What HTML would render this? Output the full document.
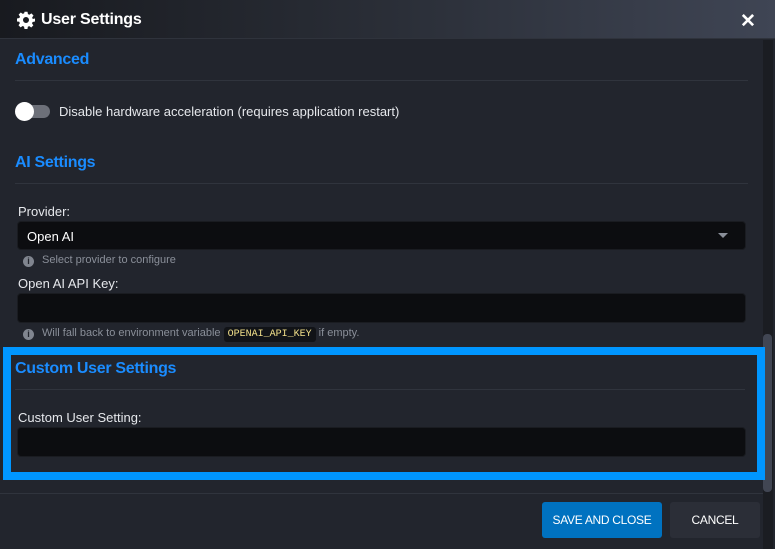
<!DOCTYPE html>
<html><head><style>
*{box-sizing:border-box;margin:0;padding:0}
body{width:775px;height:549px;background:#22252d;font-family:"Liberation Sans",sans-serif;overflow:hidden;position:relative;color:#e6e8ec}
.hdr{position:absolute;left:0;top:0;width:775px;height:39px;background:linear-gradient(90deg,#181a1f 0%,#2a2e37 50%,#3f4554 100%);border-bottom:1px solid #2f333c}
.hdr .t{position:absolute;left:41px;top:11px;font-size:16px;font-weight:bold;color:#fff;letter-spacing:-0.2px}
.x{position:absolute;left:740px;top:10px;font-size:19px;font-weight:bold;color:#fff}
.h2{position:absolute;left:15px;font-size:16px;font-weight:bold;color:#1a8cff;letter-spacing:-0.3px}
.line{position:absolute;left:15px;width:733px;height:1px;background:#30343d}
.lbl{position:absolute;left:18px;font-size:13px;color:#e6e8ec}
.inp{position:absolute;left:17px;width:729px;height:30px;background:#0c0d10;border-radius:4px;border:1px solid #1a1c21}
.hint{position:absolute;left:23px;font-size:11px;color:#8a8f99}
.hint i{display:inline-block;width:11px;height:11px;border-radius:50%;background:#80858f;color:#22252d;font-size:9px;font-style:normal;font-weight:bold;text-align:center;line-height:11px;margin-right:8px;vertical-align:-1px}
code{font-family:"Liberation Mono",monospace;font-size:10px;background:#111317;color:#f2e08a;padding:2px 4px;border-radius:3px}
.btn{position:absolute;top:502px;height:36px;font-size:12px;color:#fff;text-align:center;line-height:36px;border-radius:3px;letter-spacing:-0.3px}
</style></head><body>
<div class="hdr">
<svg style="position:absolute;left:17px;top:11px" width="18" height="18" viewBox="0 0 24 24"><path fill="#fff" d="M10 1h4l.6 3.2 1.9.8 2.7-1.8 2.8 2.8-1.8 2.7.8 1.9L24 10v4l-3.2.6-.8 1.9 1.8 2.7-2.8 2.8-2.7-1.8-1.9.8L14 24h-4l-.6-3.2-1.9-.8-2.7 1.8-2.8-2.8 1.8-2.7-.8-1.9L0 14v-4l3.2-.6.8-1.9L2.2 4.8 5 2l2.7 1.8 1.9-.8zM12 8a4 4 0 100 8 4 4 0 000-8z"/></svg>
<div class="t">User Settings</div>
<div class="x">✕</div>
</div>
<div style="position:absolute;left:763px;top:40px;width:10px;height:509px;background:#1b1d22"></div>
<div style="position:absolute;left:763px;top:334px;width:9px;height:158px;background:#414653;border-radius:4px"></div>

<div class="h2" style="top:51px">Advanced</div>
<div class="line" style="top:80px"></div>
<div style="position:absolute;left:16px;top:105px;width:34px;height:13px;background:#6d7079;border-radius:7px"></div>
<div style="position:absolute;left:15px;top:102px;width:19px;height:19px;background:#fff;border-radius:50%"></div>
<div class="lbl" style="left:59px;top:104px">Disable hardware acceleration (requires application restart)</div>

<div class="h2" style="top:154px">AI Settings</div>
<div class="line" style="top:183px"></div>
<div class="lbl" style="top:204px">Provider:</div>
<div class="inp" style="top:221px;height:29px"><span style="position:absolute;left:9px;top:7px;font-size:13px;color:#fff">Open AI</span><span style="position:absolute;right:17px;top:11px;border-left:5px solid transparent;border-right:5px solid transparent;border-top:5px solid #8a8f99"></span></div>
<div class="hint" style="top:254px"><i>i</i>Select provider to configure</div>
<div class="lbl" style="top:276px">Open AI API Key:</div>
<div class="inp" style="top:293px"></div>
<div class="hint" style="top:327px"><i>i</i>Will fall back to environment variable <code>OPENAI_API_KEY</code> if empty.</div>

<div style="position:absolute;left:3px;top:347px;width:762px;height:133px;border:8px solid #0096ff"></div>
<div class="h2" style="top:360px">Custom User Settings</div>
<div class="line" style="top:389px;width:730px"></div>
<div class="lbl" style="top:410px">Custom User Setting:</div>
<div class="inp" style="top:427px"></div>

<div style="position:absolute;left:0;top:493px;width:763px;height:1px;background:#30343d"></div>
<div class="btn" style="left:542px;width:120px;background:#0072c0">SAVE AND CLOSE</div>
<div class="btn" style="left:670px;width:90px;background:#2b2e37">CANCEL</div>
</body></html>
